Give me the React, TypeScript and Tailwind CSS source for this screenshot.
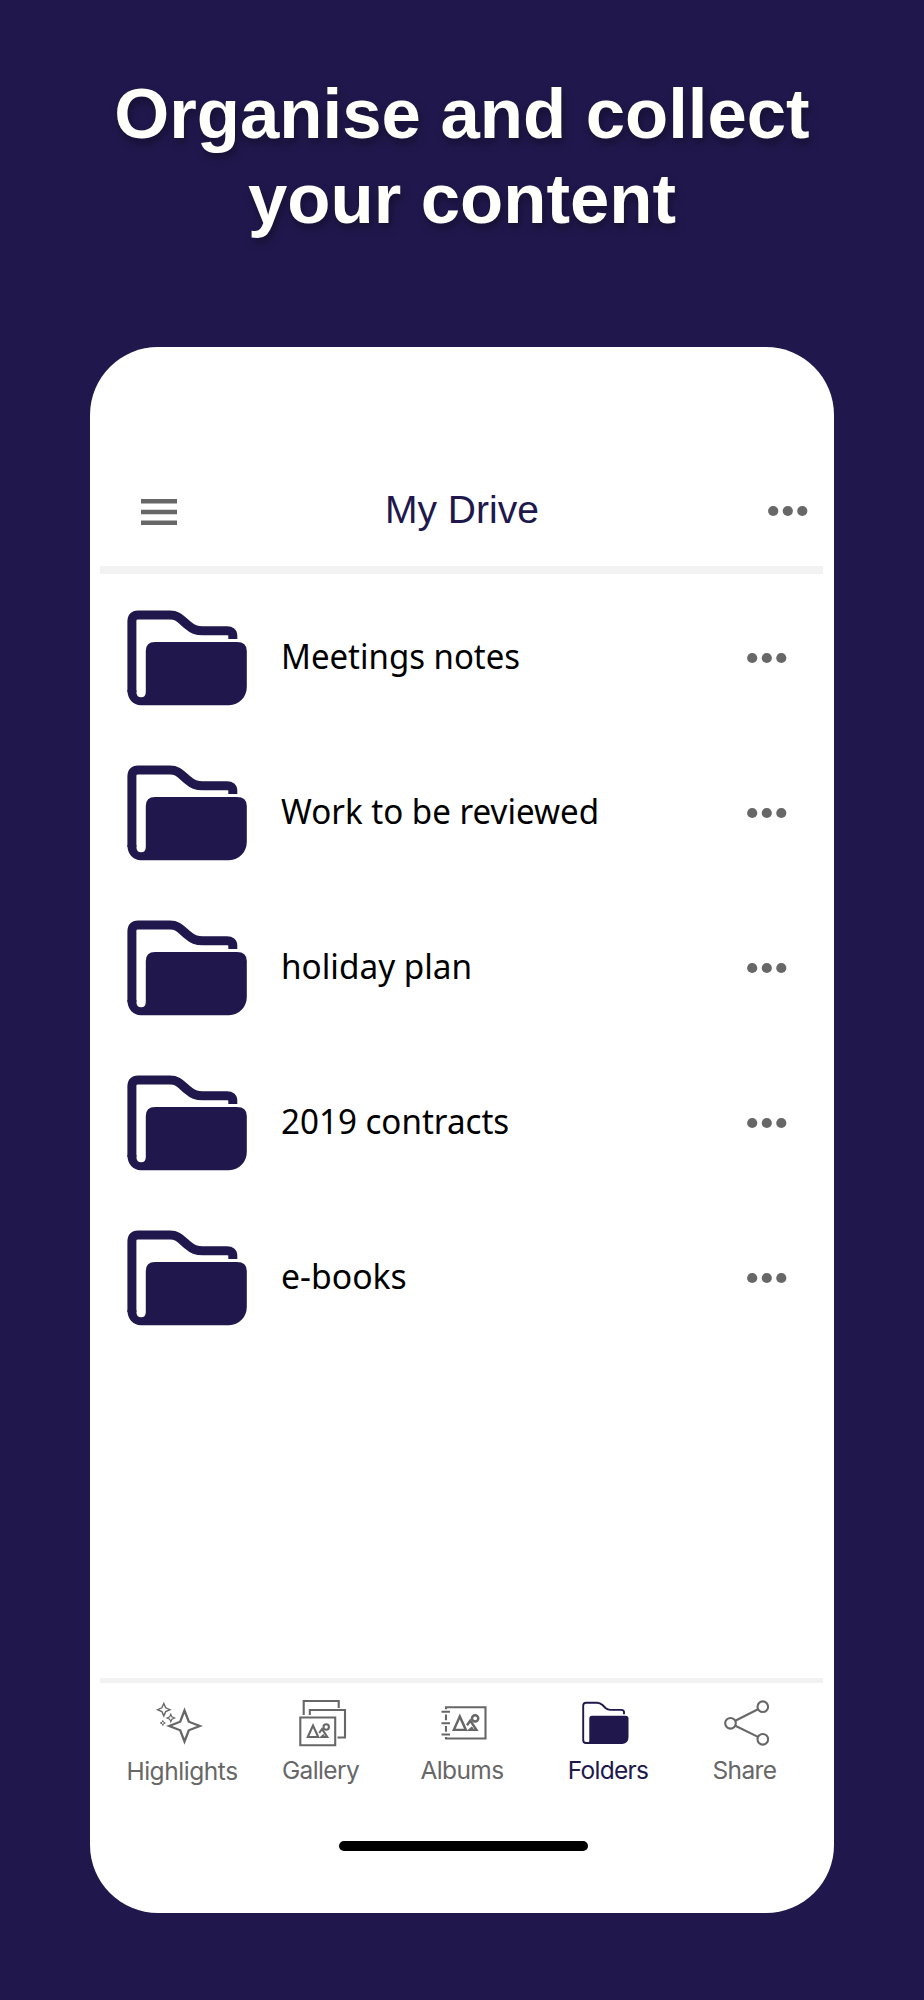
import React from "react";

const rows = [
  { name: "Meetings notes", fit: "scale-x-[0.942]" },
  { name: "Work to be reviewed", fit: "scale-x-[0.947]" },
  { name: "holiday plan", fit: "scale-x-[0.952]" },
  { name: "2019 contracts", fit: "scale-x-[0.947]" },
  { name: "e-books", fit: "scale-x-[0.965]" },
];

function Dots({ className }: { className: string }) {
  return (
    <svg viewBox="0 0 40 12" className={`h-3 w-10 shrink-0 ${className}`} fill="#676767">
      <circle cx="5.2" cy="6" r="5.1" />
      <circle cx="19.8" cy="6" r="5.1" />
      <circle cx="34.3" cy="6" r="5.1" />
    </svg>
  );
}

function Folder() {
  return (
    <svg viewBox="0 0 120 96" className="h-24 w-[120px] shrink-0">
      <path
        d="M4.9 82V11.500Q4.900 5 11 5H43C51 5 54 9.500 60 14.500C66 19.500 69 20.800 76 20.800H100Q105.800 20.800 105.800 25.500V29"
        fill="none"
        stroke="#20184c"
        strokeWidth="9"
      />
      <path
        d="M0.400 80C0.400 89 6 95.200 14 95.200H102C112 95.200 119.800 87 119.800 77V41Q119.800 32 110 32H28Q18.800 32 18.800 41V82Q18.800 87.300 14.200 87.300Q9.400 87.300 9.400 82V80Z"
        fill="#20184c"
      />
    </svg>
  );
}

function Hills() {
  return (
    <>
      <path d="M1.800 15L7 3.500L12.200 15Z" />
      <path d="M13.200 11L16 7L21.300 15H15.500L18 12.800" />
      <circle cx="20.200" cy="5" r="2.700" />
    </>
  );
}

function HighlightsIcon() {
  return (
    <>
      <path d="M31.500 11.500L35.800 22.700L46.800 27L35.800 31.300L31.500 42.500L27.200 31.300L16.200 27L27.200 22.700Z" strokeWidth="2.300" />
      <path d="M10.800 4.500L12.700 8.800L17 10.700L12.700 12.600L10.800 16.900L8.900 12.600L4.600 10.700L8.900 8.800Z" strokeWidth="1.400" />
      <path d="M17.800 15.300L18.900 17.900L21.500 19L18.900 20.100L17.800 22.700L16.700 20.100L14.100 19L16.700 17.900Z" strokeWidth="1.200" />
      <path d="M9.800 21.500L10.500 23.300L12.300 24L10.500 24.700L9.800 26.500L9.100 24.700L7.300 24L9.100 23.300Z" strokeWidth="1" />
    </>
  );
}

function GalleryIcon() {
  return (
    <>
      <path d="M12.700 16V2H47.700V9" />
      <path d="M18.800 16V11H54V38.500H46.500" />
      <path d="M9.300 18.500H44.200V46.300H9.300Z" />
      <g transform="translate(15 23)">
        <Hills />
      </g>
    </>
  );
}

function AlbumsIcon() {
  return (
    <>
      <path d="M14 10.300V8.300H53.500V39.500H14V38" />
      <path d="M14 15.500V21.300M14 27V32.800M9.500 12.700H18M9.500 24.200H18M9.500 35.500H18" />
      <g transform="translate(19.700 13.500) scale(1.160)">
        <Hills />
      </g>
    </>
  );
}

function FoldersIcon() {
  return (
    <>
      <path d="M14 44H8Q5.200 44 5.200 41V6.500Q5.200 3.700 8 3.700H19Q22 3.700 24.500 6L27.500 9Q29.500 10.900 32.500 10.900H43Q46 10.900 46 13V15.300" strokeWidth="1.900" />
      <path d="M11.300 42V19.500Q11.300 16.700 14 16.700H47.500Q50.500 16.700 50.500 19.500V38Q50.500 44 44.500 45H8L9.500 43.400Q11.300 43.400 11.300 42Z" fill="#20184c" stroke="none" />
    </>
  );
}

function ShareIcon() {
  return (
    <>
      <circle cx="15.500" cy="24.300" r="5.300" />
      <circle cx="47.800" cy="7.700" r="5.300" />
      <circle cx="47.800" cy="40.300" r="5.300" />
      <path d="M20.300 21.800L43 10.200M20.300 26.800L43 37.900" />
    </>
  );
}

const tabs = [
  { label: "Highlights", Icon: HighlightsIcon, box: "w-[165px] text-[#676767]", text: "mt-[7px] mr-px tracking-[-0.45px]" },
  { label: "Gallery", Icon: GalleryIcon, box: "w-[112px] text-[#676767]", text: "mt-1.5 mr-px tracking-[-0.65px]" },
  { label: "Albums", Icon: AlbumsIcon, box: "w-[170px] text-[#676767]", text: "mt-1.5 tracking-[-0.6px]" },
  { label: "Folders", Icon: FoldersIcon, box: "w-[122px] text-[#20184c]", text: "mt-1.5 tracking-[-0.7px]" },
  { label: "Share", Icon: ShareIcon, box: "w-[151px] text-[#676767]", text: "mt-1.5 tracking-[-0.6px]" },
];

export default function App() {
  return (
    <div className="flex h-[2000px] w-[924px] flex-col items-center overflow-hidden bg-[#20184c]">
      <h1 className="mt-[71px] h-[276px] text-center font-['Liberation_Sans',sans-serif] text-[70.7px] leading-[85px] font-bold whitespace-nowrap text-[#fffffc] [text-shadow:2px_5px_8px_rgba(0,0,0,0.35)]">
        Organise and collect
        <br />
        your content
      </h1>
      <main className="flex h-[1566px] w-[744px] flex-col rounded-[68px] bg-white pr-[11px] pl-2.5">
        <header className="flex h-[227px] items-end border-b-8 border-[#f2f2f2] pr-[15px] pl-[41px]">
          <svg viewBox="0 0 36 26" className="mb-[41px] h-[26px] w-9 shrink-0" fill="#676767">
            <path d="M0 0H36V4.600H0ZM0 10.700H36V15.300H0ZM0 21.400H36V26H0Z" />
          </svg>
          <h2 className="mb-[34px] ml-[208px] flex-1 font-['Liberation_Sans',sans-serif] text-[39px] leading-[44px] text-[#20184c]">
            My Drive
          </h2>
          <Dots className="mb-[49px]" />
        </header>
        <ul className="flex h-[1104px] flex-col pt-9 pr-9 pl-[27px]">
          {rows.map((row) => (
            <li key={row.name} className="flex h-[155px] shrink-0 items-start">
              <Folder />
              <span className={`mt-[22px] ml-[34px] flex-1 origin-left font-['Noto_Sans',sans-serif] text-[35px] leading-[48px] whitespace-nowrap text-black ${row.fit}`}>
                {row.name}
              </span>
              <Dots className="mt-[42px]" />
            </li>
          ))}
        </ul>
        <nav className="flex h-[163px] shrink-0 border-t-[5px] border-[#f2f2f2] font-['Inter',sans-serif] text-[24.5px] leading-[30px]">
          {tabs.map(({ label, Icon, box, text }) => (
            <div key={label} className={`flex shrink-0 flex-col items-center pt-4 ${box}`}>
              <svg viewBox="0 0 60 50" className="h-[50px] w-[60px]" fill="none" stroke="currentColor" strokeWidth="2.1">
                <Icon />
              </svg>
              <span className={text}>{label}</span>
            </div>
          ))}
        </nav>
        <div className="ml-[239px] h-2.5 w-[249px] shrink-0 rounded-full bg-black" />
      </main>
    </div>
  );
}
